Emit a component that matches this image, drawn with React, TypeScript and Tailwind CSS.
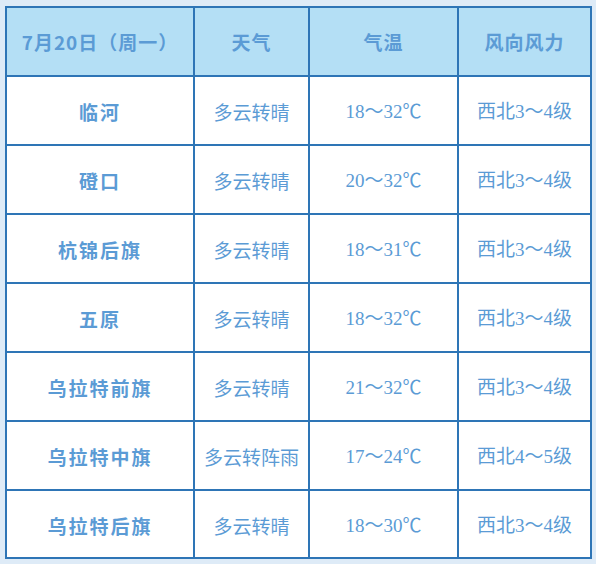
const rows: [string, string, string, string][] = [
  ["临河", "多云转晴", "18～32℃", "西北3～4级"],
  ["磴口", "多云转晴", "20～32℃", "西北3～4级"],
  ["杭锦后旗", "多云转晴", "18～31℃", "西北3～4级"],
  ["五原", "多云转晴", "18～32℃", "西北3～4级"],
  ["乌拉特前旗", "多云转晴", "21～32℃", "西北3～4级"],
  ["乌拉特中旗", "多云转阵雨", "17～24℃", "西北4～5级"],
  ["乌拉特后旗", "多云转晴", "18～30℃", "西北3～4级"],
];

const headers = ["7月20日（周一）", "天气", "气温", "风向风力"];

const sans = "font-['Noto_Sans_CJK_SC',sans-serif]";
const serif = "font-['Liberation_Serif','Noto_Sans_CJK_SC',serif]";

export default function App() {
  return (
    <div className="w-[596px] h-[564px] bg-[#deebf7] pt-[6px] pl-[5px]">
      <div className="w-[587px] grid grid-cols-[186px_113px_147px_131px] grid-rows-[67px_repeat(6,67px)_66px] gap-[2px] p-[2px] bg-[#2e75b6] text-[#5b9bd5]">
        {headers.map((h) => (
          <div
            key={h}
            className={`bg-[#b4dff5] flex items-center justify-center pt-[2px] text-[19px] font-bold tracking-[1px] ${sans}`}
          >
            {h}
          </div>
        ))}
        {rows.map((r) => (
          <>
            <div
              key={r[0]}
              className={`bg-white flex items-center justify-center pt-[4px] text-[19px] font-bold tracking-[2px] ${sans}`}
            >
              {r[0]}
            </div>
            <div className={`bg-white flex items-center justify-center pt-[4px] text-[19px] ${sans}`}>
              {r[1]}
            </div>
            <div className={`bg-white flex items-center justify-center pt-[4px] text-[19px] ${serif}`}>
              {r[2]}
            </div>
            <div className={`bg-white flex items-center justify-center pt-[4px] text-[19px] ${serif}`}>
              {r[3]}
            </div>
          </>
        ))}
      </div>
    </div>
  );
}
